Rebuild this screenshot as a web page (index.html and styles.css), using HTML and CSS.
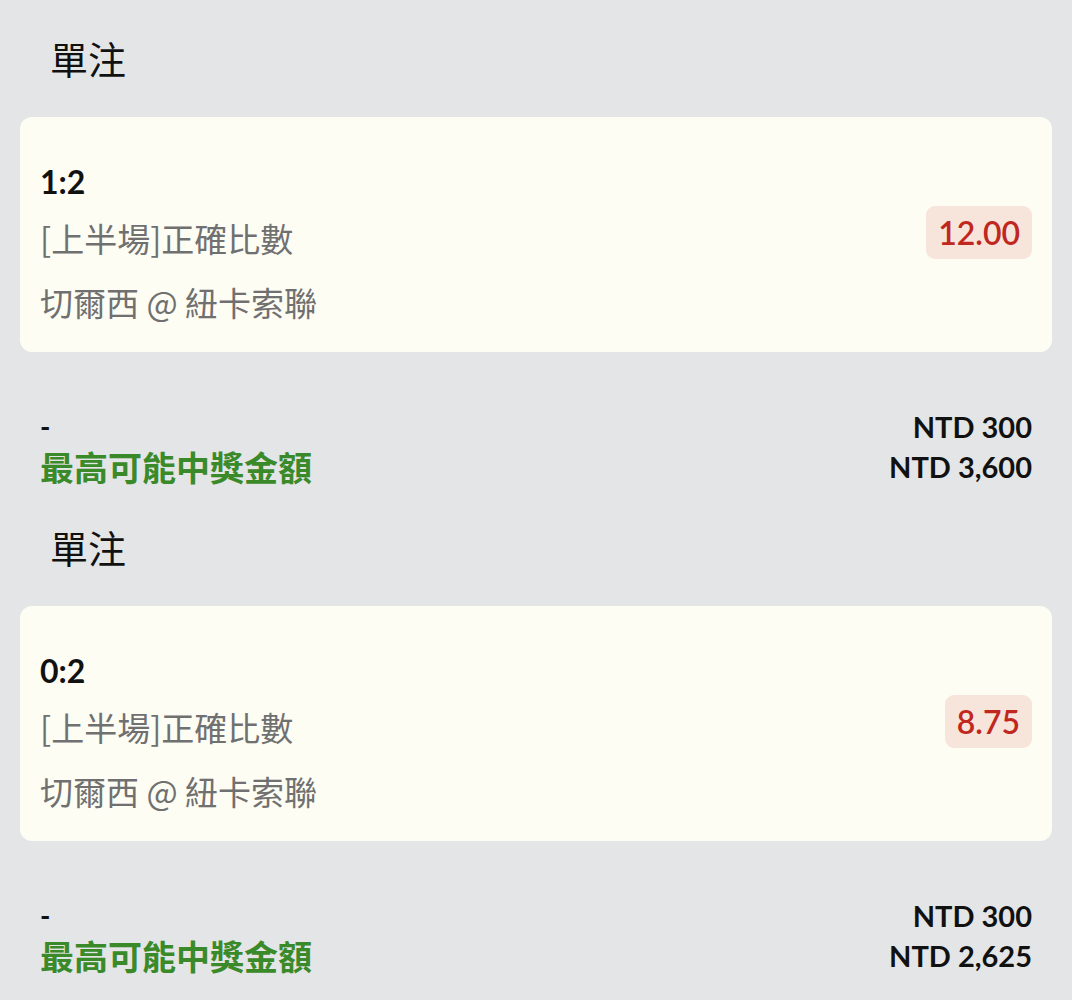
FILE: index.html
```html
<!DOCTYPE html>
<html lang="zh-Hant">
<head>
<meta charset="utf-8">
<title>單注</title>
<link rel="stylesheet" href="styles.css">
</head>
<body>
<main class="slip">
  <section class="bet">
    <h2 class="bet-type">單注</h2>
    <div class="card">
      <div class="info">
        <div class="selection">1:2</div>
        <div class="market">[上半場]正確比數</div>
        <div class="match">切爾西 @ 紐卡索聯</div>
      </div>
      <div class="odds">12.00</div>
    </div>
    <div class="summary">
      <div class="dash">-</div>
      <div class="amount">NTD 300</div>
      <div class="payout-label">最高可能中獎金額</div>
      <div class="amount">NTD 3,600</div>
    </div>
  </section>
  <section class="bet">
    <h2 class="bet-type">單注</h2>
    <div class="card">
      <div class="info">
        <div class="selection">0:2</div>
        <div class="market">[上半場]正確比數</div>
        <div class="match">切爾西 @ 紐卡索聯</div>
      </div>
      <div class="odds">8.75</div>
    </div>
    <div class="summary">
      <div class="dash">-</div>
      <div class="amount">NTD 300</div>
      <div class="payout-label">最高可能中獎金額</div>
      <div class="amount">NTD 2,625</div>
    </div>
  </section>
</main>
</body>
</html>
```
FILE: styles.css
```css
html, body {
  margin: 0;
  padding: 0;
  background: #e4e5e7;
}
body {
  font-family: Lato, "Noto Sans CJK TC", sans-serif;
  color: #111;
}
.slip {
  padding-top: 33px;
}
.bet + .bet {
  margin-top: 36px;
}
.bet-type {
  margin: 0 0 32px 0;
  padding-left: 50px;
  font-size: 38px;
  font-weight: 400;
  line-height: 52px;
  color: #111;
}
.card {
  margin: 0 20px;
  background: #fdfdf4;
  border-radius: 12px;
  padding: 41px 20px 18px 20px;
  display: flex;
  align-items: center;
  justify-content: space-between;
}
.selection {
  font-size: 32px;
  font-weight: 700;
  line-height: 48px;
  color: #111;
}
.market, .match {
  font-family: "Noto Sans CJK TC", sans-serif;
  font-size: 33px;
  line-height: 64px;
  color: #707070;
}
.odds {
  background: #f7e5dc;
  color: #c0271e;
  font-size: 32px;
  font-weight: 600;
  line-height: 37px;
  padding: 8px 12px;
  border-radius: 9px;
  margin-bottom: 28px;
}
.summary {
  margin-top: 54px;
  padding: 0 40px;
  display: grid;
  grid-template-columns: 1fr auto;
  grid-auto-rows: 40px;
  align-items: center;
}
.dash {
  font-size: 28px;
  font-weight: 700;
}
.amount {
  font-size: 29px;
  font-weight: 700;
  text-align: right;
  color: #111;
}
.payout-label {
  font-size: 34px;
  font-weight: 700;
  color: #3b8a2a;
}
```
